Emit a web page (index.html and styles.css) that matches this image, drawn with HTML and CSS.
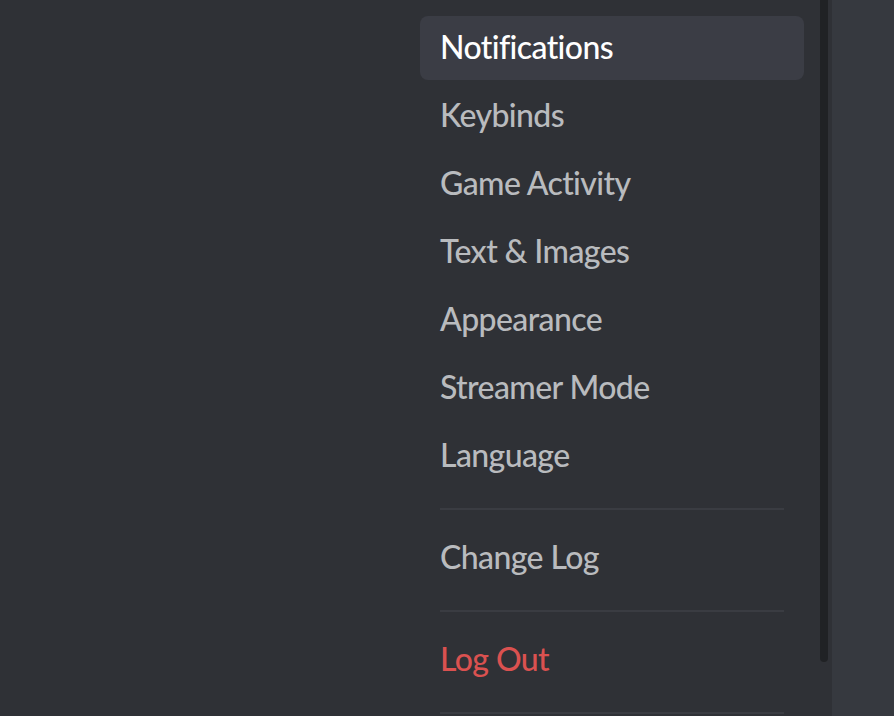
FILE: index.html
```html
<!DOCTYPE html>
<html lang="en">
<head>
    <meta charset="UTF-8">
    <meta name="viewport" content="width=device-width, initial-scale=1.0">
    <title>User Settings</title>
    <link rel="stylesheet" href="styles.css">
</head>
<body>
    <div class="sidebar">
        <nav class="side-nav">
            <div class="item selected">Notifications</div>
            <div class="item">Keybinds</div>
            <div class="item">Game Activity</div>
            <div class="item">Text &amp; Images</div>
            <div class="item">Appearance</div>
            <div class="item">Streamer Mode</div>
            <div class="item">Language</div>
            <div class="separator"></div>
            <div class="item">Change Log</div>
            <div class="separator"></div>
            <div class="item danger">Log Out</div>
            <div class="separator"></div>
        </nav>
        <div class="scroll-thumb"></div>
    </div>
    <div class="content"></div>
</body>
</html>
```

FILE: styles.css
```css
* {
    margin: 0;
    padding: 0;
    box-sizing: border-box;
}

body {
    display: flex;
    height: 100vh;
    overflow: hidden;
    background: #36393f;
    font-family: Lato, "Noto Sans", sans-serif;
}

.sidebar {
    flex: 0 0 832px;
    display: flex;
    justify-content: flex-end;
    align-items: flex-start;
    background: #2f3136;
}

.side-nav {
    width: 384px;
    margin-right: 16px;
    padding-top: 16px;
    display: flex;
    flex-direction: column;
}

.item {
    height: 64px;
    margin-bottom: 4px;
    padding: 0 20px 3px;
    display: flex;
    align-items: center;
    border-radius: 8px;
    font-size: 32px;
    font-weight: 500;
    letter-spacing: -0.6px;
    font-variant-ligatures: none;
    color: #b9bbbe;
}

.item.selected {
    background: #3b3d45;
    color: #ffffff;
}

.item.danger {
    color: #da5150;
}

.separator {
    height: 2px;
    margin: 16px 20px;
    background: #3a3c42;
}

.scroll-thumb {
    width: 8px;
    height: 662px;
    margin-right: 4px;
    background: #202225;
    border-radius: 0 0 4px 4px;
}

.content {
    flex: 1;
}
```
